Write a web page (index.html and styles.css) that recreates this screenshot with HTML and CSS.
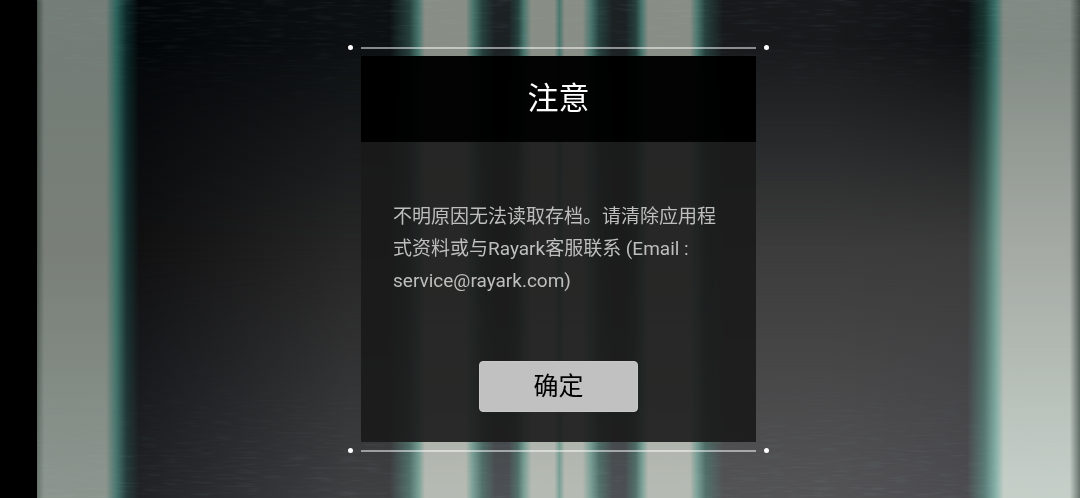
FILE: index.html
```html
<!DOCTYPE html>
<html lang="zh-CN">
<head>
<meta charset="utf-8">
<meta name="viewport" content="width=device-width, initial-scale=1">
<title>注意</title>
<link rel="stylesheet" href="styles.css">
</head>
<body>
<div class="backdrop" aria-hidden="true">
  <div class="light light-top"></div>
  <div class="light light-middle"></div>
  <div class="light light-bottom"></div>
  <svg class="streaks" width="100%" height="100%">
    <filter id="brushed" x="0" y="0" width="100%" height="100%">
      <feTurbulence type="fractalNoise" baseFrequency="0.04 0.4" numOctaves="2" seed="4"/>
      <feColorMatrix values="0 0 0 0 0.4  0 0 0 0 0.65  0 0 0 0 0.65  2 0 0 0 -1"/>
    </filter>
    <rect width="100%" height="100%" filter="url(#brushed)"/>
  </svg>
</div>
<main class="stage">
  <section class="dialog" role="alertdialog" aria-labelledby="title" aria-describedby="message">
    <div class="rule"><i class="dot"></i><i class="line"></i><i class="dot"></i></div>
    <div class="panel">
      <h1 class="title" id="title">注意</h1>
      <div class="content">
        <p class="message" id="message">不明原因无法读取存档。请清除应用程式资料或与Rayark客服联系 (Email : service@rayark.com)</p>
        <button class="confirm" type="button">确定</button>
      </div>
    </div>
    <div class="rule"><i class="dot"></i><i class="line"></i><i class="dot"></i></div>
  </section>
</main>
</body>
</html>
```
FILE: styles.css
```css
* {
  box-sizing: border-box;
}

body {
  margin: 0;
  padding-left: 37px;
  background: #000;
  font-family: Roboto, "Noto Sans CJK SC", sans-serif;
}

.backdrop {
  position: fixed;
  inset: 0 0 0 37px;
  overflow: hidden;
}

.light {
  position: absolute;
  inset: 0;
  background: linear-gradient(to right,
    var(--edge) 0%, var(--left) 0.7%, var(--left) 6.6%,
    var(--left-teal) 7.6%, var(--left-shade) 8.6%, var(--dark-a) 9.8%,
    var(--dark-b) 30%, var(--dark-b) 33.8%, var(--shade) 35.7%, var(--teal) 36.6%,
    var(--bar) 37.2%, var(--bar) 41.1%, var(--teal) 41.8%, var(--shade) 42.7%,
    var(--dark-c) 43.9%, var(--dark-c) 45.2%, var(--shade) 46.1%, var(--teal) 46.7%,
    var(--bar) 47.4%, var(--bar) 49.6%, var(--teal) 50.1%, var(--bar) 50.6%,
    var(--bar) 52.3%, var(--teal) 53.1%, var(--shade) 53.9%,
    var(--dark-c) 55.2%, var(--dark-c) 56.4%, var(--shade) 57.4%, var(--teal) 58%,
    var(--bar) 58.6%, var(--bar) 62.6%, var(--teal) 63.3%, var(--shade) 64.1%,
    var(--dark-d) 65.8%, var(--dark-d) 76%, var(--dark-e) 89.2%,
    var(--right-shade) 90.8%, var(--right-teal) 91.9%,
    var(--right) 92.7%, var(--right) 99%, var(--edge) 100%);
}

.light-top {
  --edge: #46504b;
  --left: #747d77;
  --left-teal: #2b625b;
  --left-shade: #0c2828;
  --dark-a: #030608;
  --dark-b: #0c1012;
  --dark-c: #1c2124;
  --shade: #253f3d;
  --teal: #4a766e;
  --bar: #888e86;
  --dark-d: #17191b;
  --dark-e: #0e1012;
  --right-shade: #183531;
  --right-teal: #3c7069;
  --right: #828a84;
}

.light-middle {
  --edge: #4c5550;
  --left: #797f78;
  --left-teal: #3b6f65;
  --left-shade: #162e2e;
  --dark-a: #111112;
  --dark-b: #272727;
  --dark-c: #303234;
  --shade: #33504a;
  --teal: #5a857b;
  --bar: #9ba099;
  --dark-d: #3c3c3c;
  --dark-e: #3b3b3b;
  --right-shade: #46635c;
  --right-teal: #719b90;
  --right: #a5aaa4;
  mask-image: linear-gradient(transparent 8%, #000 50%);
}

.light-bottom {
  --edge: #68756e;
  --left: #8b958e;
  --left-teal: #49766f;
  --left-shade: #263c3c;
  --dark-a: #202226;
  --dark-b: #3e3f41;
  --dark-c: #4c5054;
  --shade: #53716b;
  --teal: #7ba096;
  --bar: #b5bab3;
  --dark-d: #535355;
  --dark-e: #4c4c50;
  --right-shade: #5b7c78;
  --right-teal: #86b1a9;
  --right: #c5cfc8;
  mask-image: linear-gradient(transparent 50%, #000 98%);
}

.streaks {
  position: absolute;
  inset: 0;
  opacity: 0.1;
  mask-image: linear-gradient(#000, transparent 24%, transparent 72%, #000);
}

.stage {
  position: relative;
  min-height: 100vh;
  display: flex;
  align-items: center;
  justify-content: center;
}

.dialog {
  width: 100%;
  max-width: 421px;
  display: flex;
  flex-direction: column;
  gap: 6px;
}

.rule {
  display: flex;
  align-items: center;
  gap: 8px;
}

.dot {
  width: 5px;
  height: 5px;
  border-radius: 50%;
  background: #fff;
}

.line {
  flex: 1;
  height: 2px;
  background: rgba(255, 255, 255, 0.5);
}

.panel {
  margin: 0 13px;
}

.title {
  margin: 0;
  padding: 19px 32px;
  background: rgba(0, 0, 0, 0.98);
  color: #fff;
  font-size: 31px;
  line-height: 48px;
  font-weight: 400;
  text-align: center;
}

.content {
  display: flex;
  flex-direction: column;
  align-items: center;
  gap: 64px;
  padding: 59px 32px 30px;
  background: rgba(25, 25, 25, 0.9);
}

.message {
  align-self: stretch;
  margin: 0;
  color: #bebebe;
  font-size: 19px;
  line-height: 32px;
}

.confirm {
  min-width: 159px;
  padding: 8px 24px;
  border: 1px solid #c8c8c8;
  border-radius: 4px;
  background: #c1c1c1;
  color: #000;
  font-family: inherit;
  font-size: 25px;
  line-height: 33px;
}
```
